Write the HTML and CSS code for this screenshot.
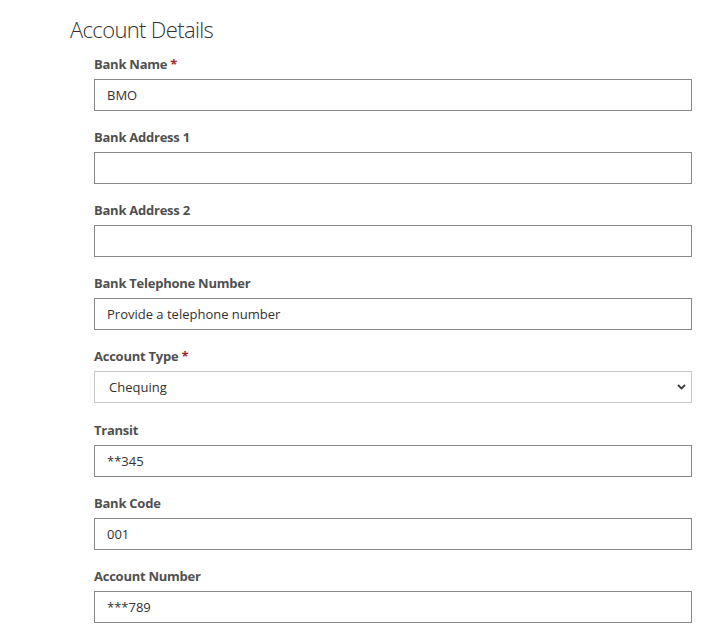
FILE: index.html
```html
<!DOCTYPE html>
<html>
<head>
<meta charset="utf-8">
<link rel="stylesheet" href="styles.css">
</head>
<body>
<div class="page">
  <h2 class="title">Account Details</h2>
  <div class="form">
    <div class="field">
      <label class="label">Bank Name <span class="req">*</span></label>
      <div class="input">BMO</div>
    </div>
    <div class="field">
      <label class="label">Bank Address 1</label>
      <div class="input"></div>
    </div>
    <div class="field">
      <label class="label">Bank Address 2</label>
      <div class="input"></div>
    </div>
    <div class="field">
      <label class="label">Bank Telephone Number</label>
      <div class="input">Provide a telephone number</div>
    </div>
    <div class="field field-select">
      <label class="label">Account Type <span class="req">*</span></label>
      <div class="select"><span>Chequing</span>
        <svg class="chev" width="9" height="6" viewBox="0 0 9 6"><path d="M1 1 L4.5 4.5 L8 1" fill="none" stroke="#3a3a3a" stroke-width="1.8"/></svg>
      </div>
    </div>
    <div class="field">
      <label class="label">Transit</label>
      <div class="input">**345</div>
    </div>
    <div class="field">
      <label class="label">Bank Code</label>
      <div class="input">001</div>
    </div>
    <div class="field">
      <label class="label">Account Number</label>
      <div class="input">***789</div>
    </div>
  </div>
</div>
</body>
</html>
```

FILE: styles.css
```css
html, body {
  margin: 0;
  padding: 0;
  background: #ffffff;
}
body {
  font-family: "Open Sans", "Noto Sans", sans-serif;
  color: #323130;
}
.page {
  padding: 14px 35px 0 70px;
}
.title {
  margin: 0;
  font-size: 22px;
  font-weight: 300;
  line-height: 30px;
  color: #323130;
  letter-spacing: -0.65px;
}
.form {
  padding-left: 24px;
  padding-top: 6px;
}
.field {
  margin-bottom: 12px;
}
.field-select {
  margin-bottom: 13px;
}
.label {
  display: block;
  padding: 5px 0;
  line-height: 19px;
  font-size: 13px;
  font-weight: 700;
  color: #505050;
  letter-spacing: -0.25px;
}
.req {
  color: #a4262c;
}
.input {
  box-sizing: border-box;
  height: 32px;
  border: 1px solid #8a8886;
  padding: 0 12px;
  font-size: 13px;
  line-height: 30px;
  color: #323130;
}
.select {
  box-sizing: border-box;
  height: 32px;
  border: 1px solid #c8c8c8;
  padding: 0 5px 0 14px;
  font-size: 13px;
  line-height: 30px;
  color: #323130;
  display: flex;
  align-items: center;
  justify-content: space-between;
}
```
